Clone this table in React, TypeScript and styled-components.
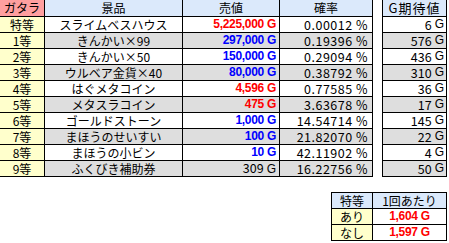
import React from 'react';
import styled, { createGlobalStyle } from 'styled-components';

const Global = createGlobalStyle`
  html, body { margin: 0; padding: 0; background: #fff; }
  body {
    font-family: "Noto Sans CJK JP", "Liberation Sans", sans-serif;
    font-size: 12px;
    color: #000;
  }
`;

const PINK = '#ff9f9f';
const BLUE = '#dbe9fb';
const YELLOW = '#ffffcc';
const GRAY = '#dedede';
const WHITE = '#ffffff';

const Page = styled.div`
  width: 448px;
  margin: -1px 0 0 -1px;
  display: flex;
  flex-direction: column;
  gap: 15px;
`;

const TopRow = styled.div`
  display: flex;
  gap: 9px;
  align-items: flex-start;
`;

const Grid = styled.div<{ $cols: string; $rows: string }>`
  display: grid;
  grid-template-columns: ${(p) => p.$cols};
  grid-template-rows: ${(p) => p.$rows};
  gap: 1px;
  padding: 1px;
  background: #000;
`;

const BottomGrid = styled(Grid)`
  align-self: flex-end;
`;

const Cell = styled.div<{ $bg: string; $align?: string }>`
  background: ${(p) => p.$bg};
  display: flex;
  align-items: center;
  justify-content: ${(p) => p.$align || 'center'};
  padding: 0 3px;
  white-space: nowrap;
  line-height: 15px;
  min-width: 0;
`;

const HeadCell = styled(Cell)<{ $wide?: boolean }>`
  font-size: ${(p) => (p.$wide ? '13px' : '12px')};
  letter-spacing: ${(p) => (p.$wide ? '1px' : '0')};
  line-height: 16px;
`;

const RankCell = styled(Cell)``;

const NameCell = styled(Cell)``;

const PriceCell = styled(Cell)<{ $color: string; $bold: boolean }>`
  font-family: "Liberation Sans", Arial, sans-serif;
  font-weight: ${(p) => (p.$bold ? 700 : 400)};
  font-size: 12px;
  letter-spacing: ${(p) => (p.$bold ? '-0.3px' : '0')};
  color: ${(p) => p.$color};
  padding-right: 3px;
`;

const PlainNum = styled.span`
  font-family: "Noto Sans CJK JP", sans-serif;
  font-weight: 400;
  font-size: 12.5px;
`;

const RateCell = styled(Cell)`
  font-size: 12.5px;
  letter-spacing: 0.5px;
  padding-right: 4px;
`;

const ExpCell = styled(Cell)`
  font-size: 12.5px;
  padding-right: 2px;
`;

const Unit = styled.span`
  margin-left: 3px;
`;

const ThinUnit = styled.span`
  margin-left: 3px;
  font-family: "Liberation Sans", Arial, sans-serif;
  font-size: 12px;
`;

type Row = {
  rank: string;
  name: string;
  price: string;
  kind: 'red' | 'blue' | 'plain';
  rate: string;
  exp: string;
};

const rows: Row[] = [
  { rank: '特等', name: 'スライムベスハウス', price: '5,225,000', kind: 'red', rate: '0.00012 %', exp: '6' },
  { rank: '1等', name: 'きんかい×99', price: '297,000', kind: 'blue', rate: '0.19396 %', exp: '576' },
  { rank: '2等', name: 'きんかい×50', price: '150,000', kind: 'blue', rate: '0.29094 %', exp: '436' },
  { rank: '3等', name: 'ウルベア金貨×40', price: '80,000', kind: 'blue', rate: '0.38792 %', exp: '310' },
  { rank: '4等', name: 'はぐメタコイン', price: '4,596', kind: 'red', rate: '0.77585 %', exp: '36' },
  { rank: '5等', name: 'メタスラコイン', price: '475', kind: 'red', rate: '3.63678 %', exp: '17' },
  { rank: '6等', name: 'ゴールドストーン', price: '1,000', kind: 'blue', rate: '14.54714 %', exp: '145' },
  { rank: '7等', name: 'まほうのせいすい', price: '100', kind: 'blue', rate: '21.82070 %', exp: '22' },
  { rank: '8等', name: 'まほうの小ビン', price: '10', kind: 'blue', rate: '42.11902 %', exp: '4' },
  { rank: '9等', name: 'ふくびき補助券', price: '309', kind: 'plain', rate: '16.22756 %', exp: '50' },
];

const colorOf = (k: Row['kind']) => (k === 'red' ? '#ff0000' : k === 'blue' ? '#0000ff' : '#000000');

const ROWS = '16px repeat(10, 15px)';

export default function App() {
  return (
    <>
      <Global />
      <Page>
        <TopRow>
          <Grid $cols="44px 137px 96px 92px" $rows={ROWS}>
            <HeadCell $bg={PINK}>ガタラ</HeadCell>
            <HeadCell $bg={BLUE}>景品</HeadCell>
            <HeadCell $bg={BLUE}>売値</HeadCell>
            <HeadCell $bg={BLUE}>確率</HeadCell>
            {rows.map((r, i) => {
              const bg = i % 2 === 1 ? GRAY : WHITE;
              return (
                <React.Fragment key={r.rank}>
                  <RankCell $bg={YELLOW}>{r.rank}</RankCell>
                  <NameCell $bg={bg}>{r.name}</NameCell>
                  <PriceCell $bg={bg} $align="flex-end" $color={colorOf(r.kind)} $bold={r.kind !== 'plain'}>
                    {r.kind === 'plain' ? (
                      <PlainNum>
                        {r.price}
                        <ThinUnit>G</ThinUnit>
                      </PlainNum>
                    ) : (
                      <>
                        {r.price}
                        <Unit>G</Unit>
                      </>
                    )}
                  </PriceCell>
                  <RateCell $bg={bg} $align="flex-end">{r.rate}</RateCell>
                </React.Fragment>
              );
            })}
          </Grid>
          <Grid $cols="63px" $rows={ROWS}>
            <HeadCell $bg={BLUE} $wide>G期待値</HeadCell>
            {rows.map((r, i) => (
              <ExpCell key={r.rank} $bg={i % 2 === 1 ? GRAY : WHITE} $align="flex-end">
                {r.exp}
                <ThinUnit>G</ThinUnit>
              </ExpCell>
            ))}
          </Grid>
        </TopRow>
        <BottomGrid $cols="40px 73px" $rows="15px 15px 15px">
          <HeadCell $bg={BLUE}>特等</HeadCell>
          <HeadCell $bg={BLUE}>1回あたり</HeadCell>
          <RankCell $bg={YELLOW}>あり</RankCell>
          <PriceCell $bg={WHITE} $color="#ff0000" $bold>
            1,604<Unit>G</Unit>
          </PriceCell>
          <RankCell $bg={YELLOW}>なし</RankCell>
          <PriceCell $bg={WHITE} $color="#ff0000" $bold>
            1,597<Unit>G</Unit>
          </PriceCell>
        </BottomGrid>
      </Page>
    </>
  );
}
